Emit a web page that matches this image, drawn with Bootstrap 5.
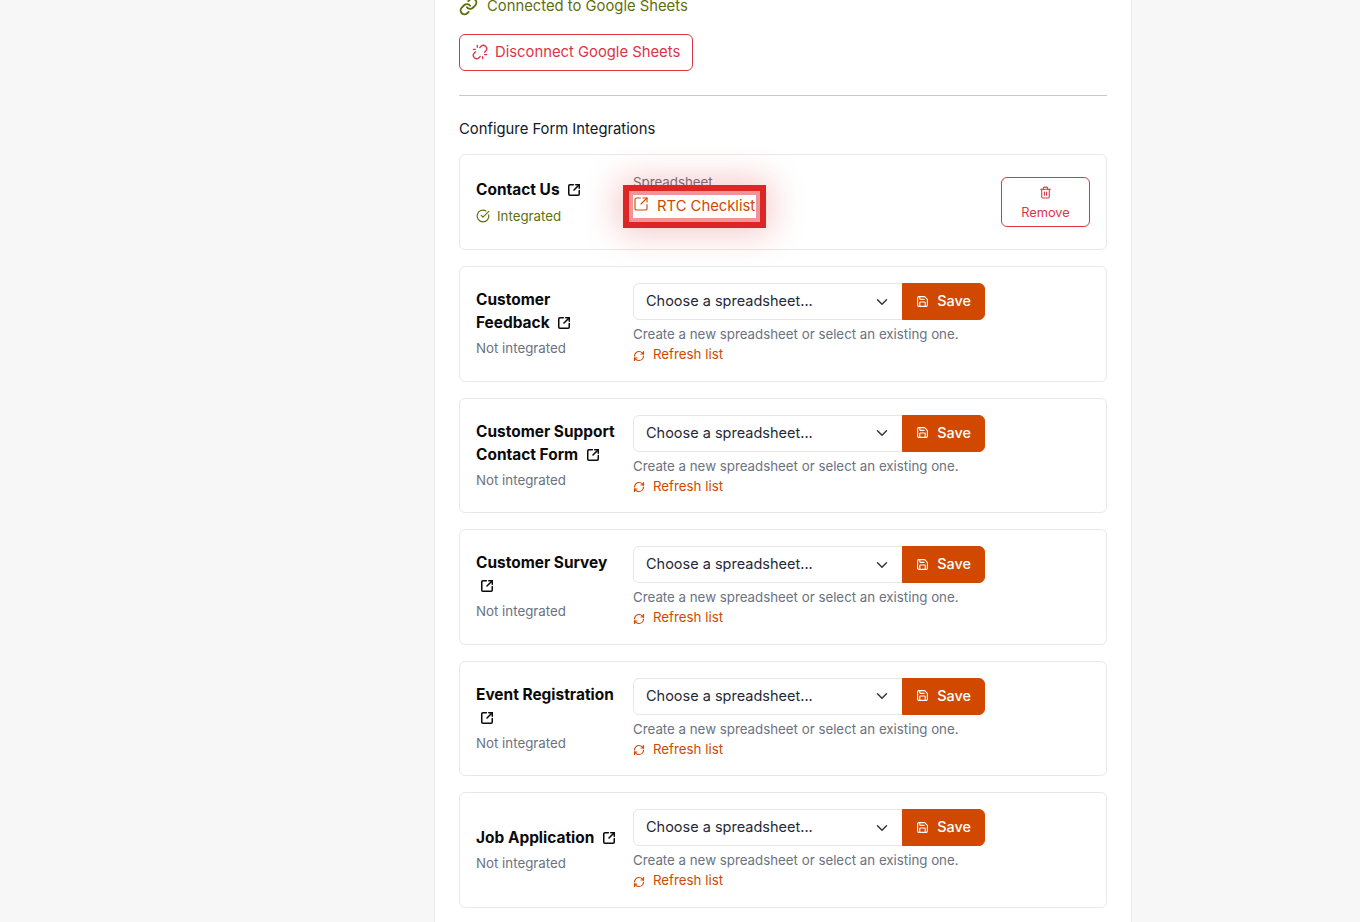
<!DOCTYPE html>
<html lang="en">
<head>
    <meta charset="UTF-8">
    <title>Google Sheets Integrations</title>
    <link href="https://cdn.jsdelivr.net/npm/bootstrap@5.3.3/dist/css/bootstrap.min.css" rel="stylesheet">
    <style>
      html, body { height: 922px; overflow: hidden; }
      body { background: #f7f7f7; font-family: Inter, "Liberation Sans", sans-serif; font-size: 14px; color: #111827; }
      .panel { width: 698px; margin-left: 434px; padding: 0 24px 24px; background: #fff; border-left: 1px solid #ececec; border-right: 1px solid #ececec; }
      .ico { width: 1em; height: 1em; fill: none; stroke: currentColor; stroke-width: 2; stroke-linecap: round; stroke-linejoin: round; flex-shrink: 0; }
      .status-ok { margin-top: -6px; margin-bottom: 16px; gap: 9px; line-height: 24px; color: #5f6f0f; font-size: 14.8px; }
      .status-ok .ico { font-size: 19px; stroke-width: 2.4; }
      .btn-disconnect { height: 37px; padding: 0 12px 1px; gap: 7px; font-size: 14.8px; --bs-btn-border-radius: 6px; }
      .btn-disconnect .ico { font-size: 16px; }
      .rule { margin: 24px 0 21px; border-color: #c9c9c9; opacity: 1; }
      .section-title { margin-bottom: 13px; line-height: 24px; font-size: 14.8px; }
      .form-card { --bs-card-border-color: #e8e8e8; --bs-card-border-radius: 6px; margin-bottom: 16px; }
      .form-card .card-body { padding: 16px; }
      .form-col { width: 157px; flex-shrink: 0; padding: 0 16px 0 0; }
      .form-name { margin: 0; font-size: 15.45px; font-weight: 700; line-height: 23px; color: #0b0b0b; }
      .form-name .ico { font-size: 14px; margin-left: 4px; vertical-align: -2px; stroke-width: 2.6; }
      .form-state { margin-top: 4px; font-size: 13.3px; line-height: 21px; color: #6b7280; }
      .form-state.on { margin-top: 5px; gap: 7px; color: #5f6f0f; }
      .form-state .ico { font-size: 14px; }
      .sheet-label { margin-top: 1px; font-size: 13.3px; line-height: 21px; color: #6b7280; }
      .sheet-link { margin: 2px 0 15px; padding-bottom: 1px; height: 23px; width: 123px; background: #fff; color: #d14900; font-size: 14.8px; line-height: 21px; text-decoration: none; white-space: nowrap;
        box-shadow: 0 0 0 4px #f09498, 0 0 0 10px #dc2626, 0 0 34px 14px rgba(220, 38, 38, .28); }
      .sheet-link .ico { font-size: 16px; margin-top: -4px; stroke-width: 1.7; }
      .btn-remove { width: 89px; height: 50px; padding: 4px 0 0; font-size: 12.8px; --bs-btn-border-radius: 6px; }
      .btn-remove .ico { font-size: 13px; }
      .sheet-group { width: 352px; }
      .sheet-group .form-select { height: 37px; padding: 0 36px 1px 12px; font-size: 14.5px; color: #1f2937; border-color: #e6e6e6; border-radius: 6px 0 0 6px; }
      .btn-save { width: 83px; height: 37px; padding: 0 0 1px; background: #d14900; border-color: #d14900; color: #fff; font-size: 14.4px; font-weight: 500; border-radius: 0 6px 6px 0 !important; }
      .btn-save .ico { font-size: 13px; }
      .hint { margin-top: 4px; font-size: 13.3px; line-height: 20.25px; color: #6b7280; }
      .refresh { font-size: 13.3px; line-height: 20.25px; color: #d14900; text-decoration: none; }
      .refresh .ico { font-size: 12px; margin-top: 3px; stroke-width: 2.4; }
    </style>
</head>
<body>

<svg width="0" height="0" class="position-absolute">
    <symbol id="i-ext" viewBox="0 0 24 24"><path d="M21 13v6a2 2 0 0 1-2 2H5a2 2 0 0 1-2-2V5a2 2 0 0 1 2-2h6"/><path d="m21 3-9 9"/><path d="M15 3h6v6"/></symbol>
    <symbol id="i-link" viewBox="0 0 24 24"><path d="M10 13a5 5 0 0 0 7.54.54l3-3a5 5 0 0 0-7.07-7.07l-1.72 1.71"/><path d="M14 11a5 5 0 0 0-7.54-.54l-3 3a5 5 0 0 0 7.07 7.07l1.71-1.71"/></symbol>
    <symbol id="i-unlink" viewBox="0 0 24 24"><path d="m18.84 12.25 1.72-1.71h-.02a5 5 0 0 0-.12-7.07 5 5 0 0 0-6.95 0l-1.72 1.71"/><path d="m5.17 11.75-1.71 1.71a5 5 0 0 0 .12 7.07 5 5 0 0 0 6.95 0l1.71-1.71"/><path d="M8 2v3"/><path d="M2 8h3"/><path d="M16 19v3"/><path d="M19 16h3"/></symbol>
    <symbol id="i-check" viewBox="0 0 24 24"><path d="M21.8 10A10 10 0 1 1 17 3.3"/><path d="m9 11 3 3L22 4"/></symbol>
    <symbol id="i-trash" viewBox="0 0 24 24"><path d="M3 6h18"/><path d="M19 6v14a2 2 0 0 1-2 2H7a2 2 0 0 1-2-2V6"/><path d="M8 6V4a2 2 0 0 1 2-2h4a2 2 0 0 1 2 2v2"/><path d="M10 11v6"/><path d="M14 11v6"/></symbol>
    <symbol id="i-save" viewBox="0 0 24 24"><path d="M15.2 3a2 2 0 0 1 1.4.6l3.8 3.8a2 2 0 0 1 .6 1.4V19a2 2 0 0 1-2 2H5a2 2 0 0 1-2-2V5a2 2 0 0 1 2-2z"/><path d="M17 21v-7a1 1 0 0 0-1-1H8a1 1 0 0 0-1 1v7"/><path d="M7 3v4a1 1 0 0 0 1 1h7"/></symbol>
    <symbol id="i-refresh" viewBox="0 0 24 24"><path d="M3 12a9 9 0 0 1 9-9 9.75 9.75 0 0 1 6.74 2.74L21 8"/><path d="M21 3v5h-5"/><path d="M21 12a9 9 0 0 1-9 9 9.75 9.75 0 0 1-6.74-2.74L3 16"/><path d="M8 16H3v5"/></symbol>
</svg>

<div class="panel">
    <div class="status-ok d-flex align-items-center">
        <svg class="ico"><use href="#i-link"/></svg>
        <span>Connected to Google Sheets</span>
    </div>
    <button type="button" class="btn btn-outline-danger btn-disconnect d-inline-flex align-items-center">
        <svg class="ico"><use href="#i-unlink"/></svg>
        Disconnect Google Sheets
    </button>
    <hr class="rule">
    <div class="section-title">Configure Form Integrations</div>

    <div class="card form-card">
        <div class="card-body d-flex align-items-center">
            <div class="form-col">
                <h6 class="form-name">Contact Us <svg class="ico"><use href="#i-ext"/></svg></h6>
                <div class="form-state on d-flex align-items-center"><svg class="ico"><use href="#i-check"/></svg>Integrated</div>
            </div>
            <div class="flex-grow-1">
                <div class="sheet-label">Spreadsheet</div>
                <a href="#" class="sheet-link position-relative d-flex align-items-center gap-2"><svg class="ico"><use href="#i-ext"/></svg>RTC Checklist</a>
            </div>
            <button type="button" class="btn btn-outline-danger btn-remove d-flex flex-column align-items-center justify-content-center gap-1">
                <svg class="ico"><use href="#i-trash"/></svg>
                Remove
            </button>
        </div>
    </div>

    <div id="forms"></div>
</div>

<script>
  // Forms that have no spreadsheet yet
  const forms = ["Customer Feedback", "Customer Support Contact Form", "Customer Survey", "Event Registration", "Job Application"];
  const container = document.getElementById("forms");

  forms.forEach(name => {
    const div = document.createElement("div");
    div.className = "card form-card";
    div.innerHTML = `
      <div class="card-body d-flex align-items-center">
        <div class="form-col">
          <h6 class="form-name">${name} <svg class="ico"><use href="#i-ext"/></svg></h6>
          <div class="form-state">Not integrated</div>
        </div>
        <div>
          <div class="input-group sheet-group">
            <select class="form-select">
              <option>Choose a spreadsheet...</option>
            </select>
            <button type="button" class="btn btn-save d-flex align-items-center justify-content-center gap-2">
              <svg class="ico"><use href="#i-save"/></svg>Save
            </button>
          </div>
          <div class="hint">Create a new spreadsheet or select an existing one.</div>
          <a href="#" class="refresh d-flex align-items-center gap-2"><svg class="ico"><use href="#i-refresh"/></svg>Refresh list</a>
        </div>
      </div>`;
    container.appendChild(div);
  });
</script>
<script src="https://cdn.jsdelivr.net/npm/bootstrap@5.3.3/dist/js/bootstrap.bundle.min.js"></script>
</body>
</html>
